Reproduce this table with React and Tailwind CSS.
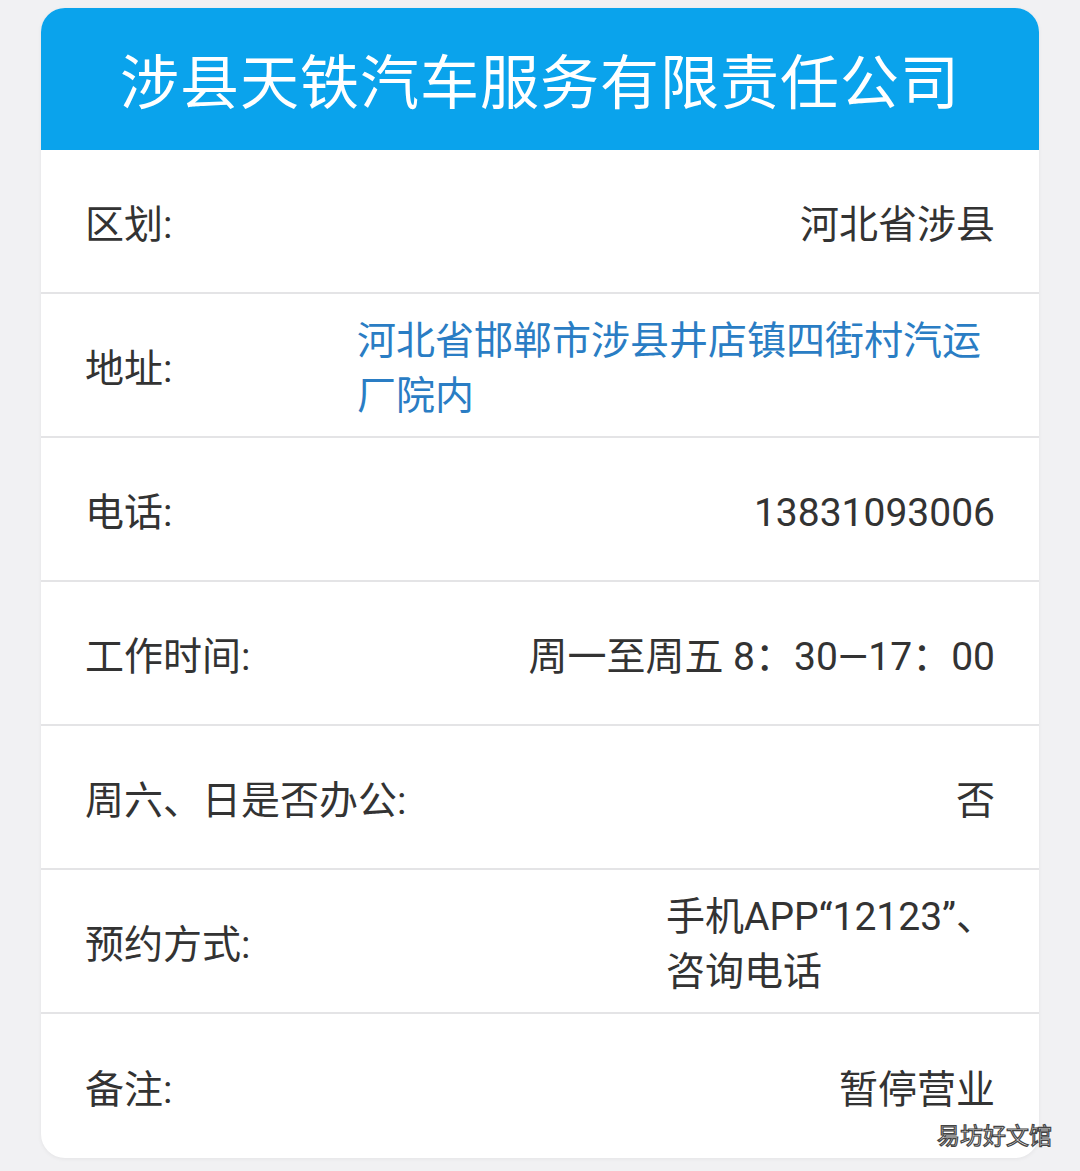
const rows = [
  { label: '区划:', value: '河北省涉县' },
  { label: '地址:', value: '河北省邯郸市涉县井店镇四街村汽运厂院内', link: true },
  { label: '电话:', value: '13831093006' },
  { label: '工作时间:', value: '周一至周五 8：30—17：00' },
  { label: '周六、日是否办公:', value: '否' },
  { label: '预约方式:', value: ['手机APP“12123”、', '咨询电话'] },
  { label: '备注:', value: '暂停营业' },
];

const App = () => {
  return (
    <div className="relative min-h-[1171px] bg-[#f1f1f3] pt-[8px] font-['Roboto','Noto_Sans_CJK_SC',sans-serif]">
      <div className="mx-[41px] w-[998px] overflow-hidden rounded-[24px] bg-white shadow-[0_1px_4px_rgba(0,0,0,0.06)]">
        {/* Header */}
        <div className="flex h-[142px] items-center justify-center bg-[#0aa3ec] pt-[8px]">
          <h1 className="text-[59px] leading-none tracking-[1px] text-white">涉县天铁汽车服务有限责任公司</h1>
        </div>

        {/* Info rows */}
        <div className="divide-y-2 divide-[#e4e4e6]">
          {rows.map((row) => (
            <div key={row.label} className="flex h-[144px] items-center justify-between pl-[44px] pr-[44px] pt-[8px] text-[39px] text-[#333]">
              <span className="shrink-0">{row.label}</span>
              {row.link ? (
                <span className="w-[638px] text-left leading-[55px] text-[#2a7dc4]">{row.value}</span>
              ) : Array.isArray(row.value) ? (
                <span className="text-left leading-[55px]">
                  {row.value[0]}
                  <br />
                  {row.value[1]}
                </span>
              ) : (
                <span className="text-right">{row.value}</span>
              )}
            </div>
          ))}
        </div>
      </div>

      {/* Watermark */}
      <div className="absolute right-[28px] top-[1125px] text-[23px] leading-none text-white [-webkit-text-stroke:1.2px_#444]">
        易坊好文馆
      </div>
    </div>
  );
};

export default App;
